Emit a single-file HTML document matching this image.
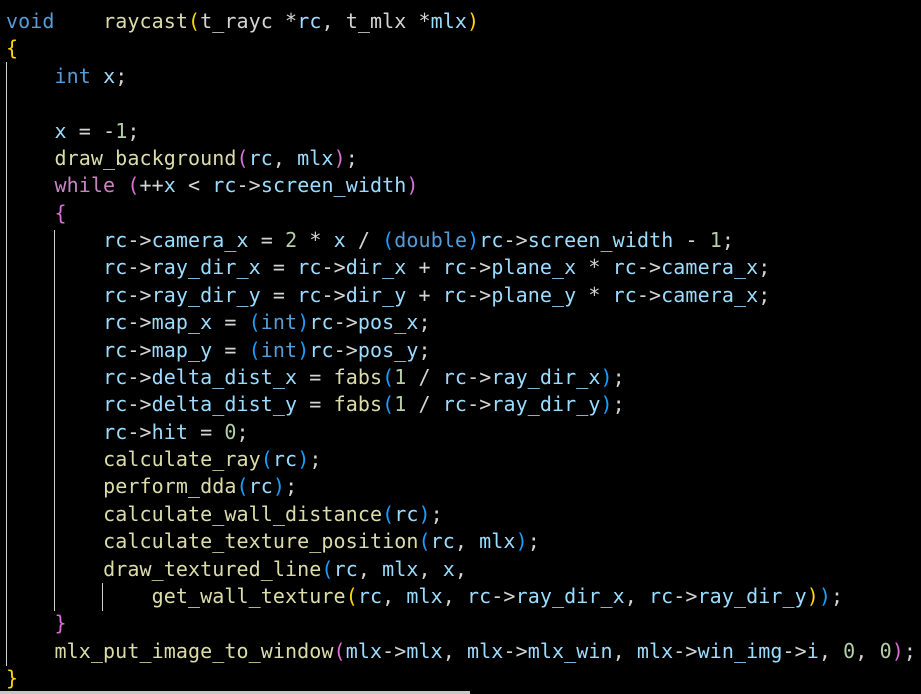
<!DOCTYPE html>
<html><head><meta charset="utf-8"><style>
html,body{margin:0;padding:0;background:#000;width:921px;height:694px;overflow:hidden}
pre{position:absolute;left:6px;top:8px;margin:0;font-family:"DejaVu Sans Mono","Liberation Mono",monospace;font-size:20px;line-height:27.375px;color:#d4d4d4;letter-spacing:0.09px}
.k{color:#569cd6}.t{color:#d4d4d4}.f{color:#dcdcaa}.v{color:#9cdcfe}.n{color:#b5cea8}.w{color:#c586c0}
.b1{color:#ffd700}.b2{color:#da70d6}.b3{color:#179fff}
.g{position:absolute;width:1px;background:#d0d0d0}
</style></head><body>
<div class="g" style="left:6px;top:62px;height:604px"></div>
<div class="g" style="left:54px;top:230px;height:381px"></div>
<div class="g" style="left:102px;top:583px;height:28px"></div>
<div style="position:absolute;left:0;top:691px;width:470px;height:3px;background:#c8c8c8"></div>
<pre><span class="k">void</span>    <span class="f">raycast</span><span class="b1">(</span><span class="t">t_rayc</span> *<span class="v">rc</span>, <span class="t">t_mlx</span> *<span class="v">mlx</span><span class="b1">)</span>
<span class="b1">{</span>
    <span class="k">int</span> <span class="v">x</span>;

    <span class="v">x</span> = -<span class="n">1</span>;
    <span class="f">draw_background</span><span class="b2">(</span><span class="v">rc</span>, <span class="v">mlx</span><span class="b2">)</span>;
    <span class="w">while</span> <span class="b2">(</span>++<span class="v">x</span> &lt; <span class="v">rc</span>-&gt;<span class="v">screen_width</span><span class="b2">)</span>
    <span class="b2">{</span>
        <span class="v">rc</span>-&gt;<span class="v">camera_x</span> = <span class="n">2</span> * <span class="v">x</span> / <span class="b3">(</span><span class="k">double</span><span class="b3">)</span><span class="v">rc</span>-&gt;<span class="v">screen_width</span> - <span class="n">1</span>;
        <span class="v">rc</span>-&gt;<span class="v">ray_dir_x</span> = <span class="v">rc</span>-&gt;<span class="v">dir_x</span> + <span class="v">rc</span>-&gt;<span class="v">plane_x</span> * <span class="v">rc</span>-&gt;<span class="v">camera_x</span>;
        <span class="v">rc</span>-&gt;<span class="v">ray_dir_y</span> = <span class="v">rc</span>-&gt;<span class="v">dir_y</span> + <span class="v">rc</span>-&gt;<span class="v">plane_y</span> * <span class="v">rc</span>-&gt;<span class="v">camera_x</span>;
        <span class="v">rc</span>-&gt;<span class="v">map_x</span> = <span class="b3">(</span><span class="k">int</span><span class="b3">)</span><span class="v">rc</span>-&gt;<span class="v">pos_x</span>;
        <span class="v">rc</span>-&gt;<span class="v">map_y</span> = <span class="b3">(</span><span class="k">int</span><span class="b3">)</span><span class="v">rc</span>-&gt;<span class="v">pos_y</span>;
        <span class="v">rc</span>-&gt;<span class="v">delta_dist_x</span> = <span class="f">fabs</span><span class="b3">(</span><span class="n">1</span> / <span class="v">rc</span>-&gt;<span class="v">ray_dir_x</span><span class="b3">)</span>;
        <span class="v">rc</span>-&gt;<span class="v">delta_dist_y</span> = <span class="f">fabs</span><span class="b3">(</span><span class="n">1</span> / <span class="v">rc</span>-&gt;<span class="v">ray_dir_y</span><span class="b3">)</span>;
        <span class="v">rc</span>-&gt;<span class="v">hit</span> = <span class="n">0</span>;
        <span class="f">calculate_ray</span><span class="b3">(</span><span class="v">rc</span><span class="b3">)</span>;
        <span class="f">perform_dda</span><span class="b3">(</span><span class="v">rc</span><span class="b3">)</span>;
        <span class="f">calculate_wall_distance</span><span class="b3">(</span><span class="v">rc</span><span class="b3">)</span>;
        <span class="f">calculate_texture_position</span><span class="b3">(</span><span class="v">rc</span>, <span class="v">mlx</span><span class="b3">)</span>;
        <span class="f">draw_textured_line</span><span class="b3">(</span><span class="v">rc</span>, <span class="v">mlx</span>, <span class="v">x</span>,
            <span class="f">get_wall_texture</span><span class="b1">(</span><span class="v">rc</span>, <span class="v">mlx</span>, <span class="v">rc</span>-&gt;<span class="v">ray_dir_x</span>, <span class="v">rc</span>-&gt;<span class="v">ray_dir_y</span><span class="b1">)</span><span class="b3">)</span>;
    <span class="b2">}</span>
    <span class="f">mlx_put_image_to_window</span><span class="b2">(</span><span class="v">mlx</span>-&gt;<span class="v">mlx</span>, <span class="v">mlx</span>-&gt;<span class="v">mlx_win</span>, <span class="v">mlx</span>-&gt;<span class="v">win_img</span>-&gt;<span class="v">i</span>, <span class="n">0</span>, <span class="n">0</span><span class="b2">)</span>;
<span class="b1">}</span></pre>
</body></html>
